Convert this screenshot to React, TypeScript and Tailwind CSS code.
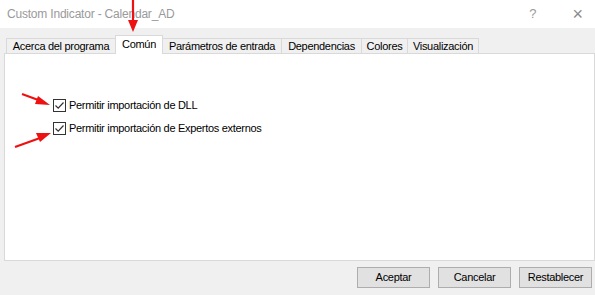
import React from 'react'

const tabs = [
  { label: 'Acerca del programa', w: 'w-[109px]' },
  { label: 'Común', w: 'w-[48px]', active: true },
  { label: 'Parámetros de entrada', w: 'w-[118px]' },
  { label: 'Dependencias', w: 'w-[80px]' },
  { label: 'Colores', w: 'w-[46px]' },
  { label: 'Visualización', w: 'w-[72px]' },
]

const Check = () => (
  <div className="w-[13px] h-[13px] border border-[#333] bg-white flex items-center justify-center shrink-0">
    <svg width="11" height="11" viewBox="0 0 11 11">
      <path d="M1.5 5.5 L4.2 8.2 L9.5 2.5" fill="none" stroke="#333" strokeWidth="1.2" />
    </svg>
  </div>
)

const App = () => {
  return (
    <div
      className="relative w-[595px] h-[295px] bg-[#f0f0f0] overflow-hidden text-black"
      style={{ fontFamily: '"Liberation Sans", Arial, sans-serif' }}
    >
      <div className="h-[28px] bg-white flex items-center pl-[7px] pr-[12px]">
        <span className="text-[12px] text-[#9a9a9a] tracking-[-0.2px] whitespace-nowrap">
          Custom Indicator - Calendar_AD
        </span>
        <span className="ml-auto text-[13px] text-[#9a9a9a]">?</span>
        <span className="ml-[36px] text-[18px] font-light text-[#8a8a8a] leading-none">×</span>
      </div>

      <div className="px-[4px] pt-[7px]">
        <div className="flex items-end pl-[2px] h-[19px] relative z-10 -mb-px">
          {tabs.map((t, i) =>
            t.active ? (
              <div
                key={t.label}
                className={`${t.w} h-[19px] bg-white border-x border-t border-[#d9d9d9] flex items-center justify-center text-[11px] tracking-[-0.3px] whitespace-nowrap pb-[2px]`}
              >
                {t.label}
              </div>
            ) : (
              <div
                key={t.label}
                className={`${t.w} h-[16px] bg-[#f0f0f0] border-t border-[#d9d9d9] border-b ${i === 0 ? 'border-l' : ''} ${
                  i === tabs.length - 1 ? 'border-r' : ''
                } ${i > 0 && !tabs[i - 1].active ? 'border-l' : ''} flex items-center justify-center text-[11px] tracking-[-0.3px] whitespace-nowrap`}
              >
                {t.label}
              </div>
            )
          )}
        </div>
        <div className="h-[208px] w-[591px] bg-white border border-[#d9d9d9] pl-[48px] pt-[45px] flex flex-col gap-[10px]">
          <div className="flex items-center gap-[3px] h-[13px]">
            <Check />
            <span className="text-[11px] tracking-[-0.3px] whitespace-nowrap">Permitir importación de DLL</span>
          </div>
          <div className="flex items-center gap-[3px] h-[13px]">
            <Check />
            <span className="text-[11px] tracking-[-0.3px] whitespace-nowrap">
              Permitir importación de Expertos externos
            </span>
          </div>
        </div>
      </div>

      <div className="flex justify-end gap-[8px] pr-[3px] mt-[6px]">
        {['Aceptar', 'Cancelar', 'Restablecer'].map((b) => (
          <button
            key={b}
            className="w-[73px] h-[21px] bg-[#e1e1e1] border border-[#adadad] text-[11px] tracking-[-0.3px] flex items-center justify-center"
          >
            {b}
          </button>
        ))}
      </div>

      <svg className="absolute inset-0 pointer-events-none" width="595" height="295">
        <g stroke="#ee1111" strokeWidth="2.2" fill="#ee1111">
          <line x1="133" y1="0" x2="133" y2="22" />
          <polygon points="128,20 138,20 133,32" stroke="none" />
          <line x1="22" y1="94" x2="41" y2="101" />
          <polygon points="38,96 35,104 50,105" stroke="none" />
          <line x1="15" y1="147" x2="40" y2="138" />
          <polygon points="36,133 40,142 51,133" stroke="none" />
        </g>
      </svg>
    </div>
  )
}

export default App
